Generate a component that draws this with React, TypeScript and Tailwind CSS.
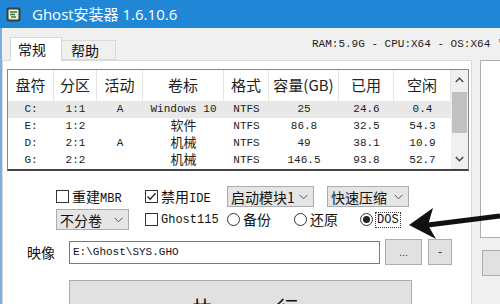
import React from 'react'

const cjk = "font-['Noto_Sans_CJK_SC',sans-serif]"
const mono = "font-['Liberation_Mono','Noto_Sans_CJK_SC',monospace]"

const cols = [
  { title: '盘符', w: 'w-[46px]' },
  { title: '分区', w: 'w-[43px]' },
  { title: '活动', w: 'w-[46px]' },
  { title: '卷标', w: 'w-[81px]' },
  { title: '格式', w: 'w-[45px]' },
  { title: '容量(GB)', w: 'w-[70px]' },
  { title: '已用', w: 'w-[55px]' },
  { title: '空闲', w: 'w-[57px]' },
]

const rows = [
  ['C:', '1:1', 'A', 'Windows 10', 'NTFS', '25', '24.6', '0.4'],
  ['E:', '1:2', '', '软件', 'NTFS', '86.8', '32.5', '54.3'],
  ['D:', '2:1', 'A', '机械', 'NTFS', '49', '38.1', '10.9'],
  ['G:', '2:2', '', '机械', 'NTFS', '146.5', '93.8', '52.7'],
]

const isCjk = (s: string) => /[\u4e00-\u9fff]/.test(s)

const Check = ({ checked }: { checked?: boolean }) => (
  <span className="w-[13px] h-[13px] border border-[#333] bg-white flex items-center justify-center shrink-0">
    {checked && (
      <svg width="11" height="11" viewBox="0 0 11 11">
        <path d="M1.5 5.5 L4.2 8.3 L9.5 2.2" fill="none" stroke="#222" strokeWidth="1.3" />
      </svg>
    )}
  </span>
)

const Radio = ({ checked }: { checked?: boolean }) => (
  <span className="w-[13px] h-[13px] rounded-full border border-[#333] bg-white flex items-center justify-center shrink-0">
    {checked && <span className="w-[7px] h-[7px] rounded-full bg-[#222]" />}
  </span>
)

const Select = ({ label, w }: { label: string; w: string }) => (
  <div className={`${w} h-[21px] bg-[#e5e5e5] border border-[#acacac] flex items-center justify-between pl-[3px] pr-[5px]`}>
    <span className={`${cjk} text-[14px] text-[#111] leading-none`}>{label}</span>
    <svg width="9" height="6" viewBox="0 0 9 6">
      <path d="M0.5 0.8 L4.5 4.8 L8.5 0.8" fill="none" stroke="#555" strokeWidth="1" />
    </svg>
  </div>
)

const App: React.FC = () => {
  return (
    <div className="w-[500px] h-[304px] overflow-hidden relative bg-[#f0f0f0] flex flex-col">
      {/* Title bar */}
      <div className="h-[28px] bg-[#2087d7] flex items-center pl-[6px] shrink-0">
        <svg width="15" height="15" viewBox="0 0 15 15">
          <rect x="0.5" y="0.5" width="14" height="14" rx="2" fill="#3a3f3a" />
          <rect x="2.5" y="2.5" width="10" height="10" rx="1" fill="#e4f2dc" />
          <path d="M4 5 H11 M4 7.5 H9 M5 10 H10" stroke="#3f7a45" strokeWidth="1.4" />
        </svg>
        <span className="ml-[11px] text-white text-[15px] font-['Open_Sans','Noto_Sans_CJK_SC',sans-serif]">
          Ghost安装器 1.6.10.6
        </span>
      </div>

      <div className="flex-1 flex border-l-2 border-[#7aaedc]">
        <div className="flex-1 flex flex-col">
          {/* Tabs + system info */}
          <div className="h-[32px] flex items-end pl-[8px] shrink-0 relative">
            <div className={`w-[52px] h-[24px] bg-white border border-[#d9d9d9] border-b-0 relative z-10 -mb-px flex items-center pl-[7px] ${cjk} text-[14px] text-[#111]`}>
              常规
            </div>
            <div className={`w-[54px] h-[20px] bg-[#f0f0f0] border border-[#d9d9d9] border-l-0 flex items-center pl-[9px] ${cjk} text-[14px] text-[#111]`}>
              帮助
            </div>
            <span className={`absolute left-[310px] top-[8px] whitespace-nowrap ${mono} text-[11px] text-[#222]`}>
              RAM:5.9G - CPU:X64 - OS:X64 '
            </span>
          </div>

          <div className="flex-1 flex items-start">
            {/* Tab page */}
            <div className="w-[470px] h-[260px] bg-white border border-[#d9d9d9] flex flex-col">
              {/* List view */}
              <div className="mt-[8px] ml-[4px] w-[462px] h-[102px] border border-[#828790] border-b-2 border-b-[#444] bg-white flex">
                <div className="flex flex-col">
                  <div className="flex h-[31px]">
                    {cols.map((c) => (
                      <div
                        key={c.title}
                        className={`${c.w} h-full border-r border-[#e5e5e5] flex items-center justify-center ${cjk} text-[15px] text-[#222]`}
                      >
                        {c.title}
                      </div>
                    ))}
                  </div>
                  {rows.map((r, i) => (
                    <div key={i} className={`flex h-[17px] ${i === 0 ? 'bg-[#e8e8e8]' : ''}`}>
                      {r.map((v, j) => (
                        <div
                          key={j}
                          className={`${cols[j].w} h-[17px] flex items-center justify-center whitespace-nowrap text-[#222] ${
                            isCjk(v) ? `${cjk} text-[13px] leading-[15px]` : `${mono} text-[11px]`
                          }`}
                        >
                          {isCjk(v) ? <span className="relative -top-[2px]">{v}</span> : v}
                        </div>
                      ))}
                    </div>
                  ))}
                </div>
                {/* Scrollbar */}
                <div className="w-[17px] bg-[#f0f0f0] flex flex-col items-center">
                  <div className="h-[20px] flex items-center justify-center">
                    <svg width="9" height="6" viewBox="0 0 9 6">
                      <path d="M0.8 5 L4.5 1.3 L8.2 5" fill="none" stroke="#444" strokeWidth="1.4" />
                    </svg>
                  </div>
                  <div className="mt-[2px] w-[15px] h-[41px] bg-[#c1c1c1]" />
                  <div className="flex-1" />
                  <div className="h-[20px] flex items-center justify-center">
                    <svg width="9" height="6" viewBox="0 0 9 6">
                      <path d="M0.8 1 L4.5 4.7 L8.2 1" fill="none" stroke="#444" strokeWidth="1.4" />
                    </svg>
                  </div>
                </div>
              </div>

              {/* Options row 1 */}
              <div className="mt-[15px] pl-[53px] flex items-center h-[21px]">
                <div className={`w-[89px] flex items-center gap-[3px] ${cjk} text-[14px] text-[#111]`}>
                  <Check />
                  <span>重建<span className={`${mono} text-[12px]`}>MBR</span></span>
                </div>
                <div className={`w-[82px] flex items-center gap-[3px] ${cjk} text-[14px] text-[#111]`}>
                  <Check checked />
                  <span>禁用<span className={`${mono} text-[12px]`}>IDE</span></span>
                </div>
                <Select label="启动模块1" w="w-[87px]" />
                <div className="w-[13px]" />
                <Select label="快速压缩" w="w-[82px]" />
              </div>

              {/* Options row 2 */}
              <div className="mt-[2px] pl-[53px] flex items-center h-[21px]">
                <Select label="不分卷" w="w-[73px]" />
                <div className="w-[16px]" />
                <div className={`w-[82px] flex items-center gap-[3px] ${mono} text-[12px] text-[#111]`}>
                  <Check />
                  <span>Ghost115</span>
                </div>
                <div className={`w-[67px] flex items-center gap-[3px] ${cjk} text-[14px] text-[#111]`}>
                  <Radio />
                  <span>备份</span>
                </div>
                <div className={`w-[66px] flex items-center gap-[3px] ${cjk} text-[14px] text-[#111]`}>
                  <Radio />
                  <span>还原</span>
                </div>
                <div className={`flex items-center gap-[2px] ${mono} text-[12px] text-[#111]`}>
                  <Radio checked />
                  <span className="border border-dotted border-[#333] px-px leading-[14px]">DOS</span>
                </div>
              </div>

              {/* Image path row */}
              <div className="mt-[9px] pl-[24px] flex items-center">
                <span className={`w-[42px] ${cjk} text-[14px] text-[#111]`}>映像</span>
                <div className={`w-[311px] h-[23px] bg-white border border-[#7a7a7a] flex items-center pl-[3px] ${mono} text-[11px] text-[#111]`}>
                  E:\Ghost\SYS.GHO
                </div>
                <div className="ml-[5px] w-[37px] h-[26px] bg-[#e1e1e1] border border-[#adadad] flex items-center justify-center text-[11px] text-[#444] font-['Liberation_Sans',sans-serif]">
                  ...
                </div>
                <div className="ml-[6px] w-[24px] h-[26px] bg-[#e1e1e1] border border-[#adadad] flex items-center justify-center text-[12px] text-[#333] font-['Liberation_Sans',sans-serif]">
                  -
                </div>
              </div>

              {/* Run button */}
              <div className={`mt-[15px] ml-[66px] w-[343px] h-[50px] bg-[#e1e1e1] border border-[#adadad] flex justify-center gap-[62px] pl-[10px] pt-[15px] ${cjk} text-[22px] leading-none text-[#111]`}>
                <span>执</span>
                <span>行</span>
              </div>
            </div>

            {/* Right column */}
            <div className="ml-[8px] flex-1 flex flex-col">
              <div className="h-[178px] bg-white border border-[#adadad] border-r-0" />
              <div className="mt-[12px] ml-[2px] h-[26px] bg-[#e1e1e1] border border-[#adadad] border-r-0" />
            </div>
          </div>
        </div>
      </div>

      {/* Annotation arrow */}
      <svg className="absolute left-0 top-0 pointer-events-none" width="500" height="304" viewBox="0 0 500 304">
        <path d="M500 216 L428 225" stroke="#111" strokeWidth="5" fill="none" />
        <path d="M409 225 L433 208 L428 225 L436 239 Z" fill="#111" />
      </svg>
    </div>
  )
}

export default App
